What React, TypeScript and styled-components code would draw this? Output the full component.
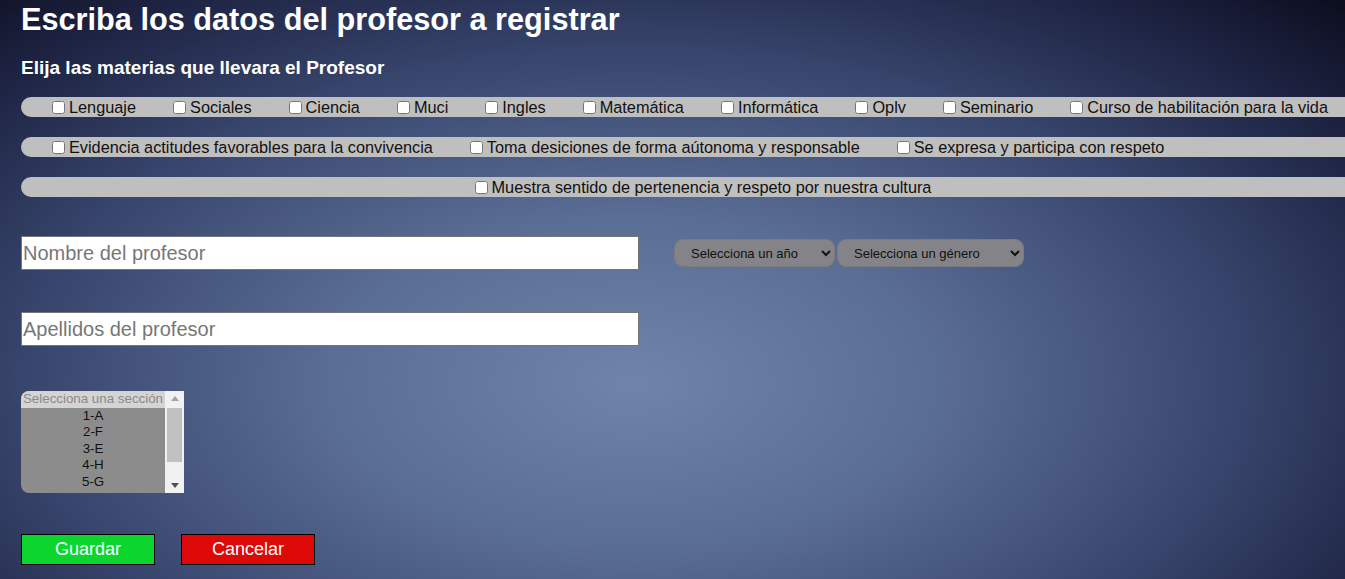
import React from "react";
import styled, { createGlobalStyle } from "styled-components";

const GlobalStyle = createGlobalStyle`
  html, body {
    margin: 0;
    padding: 0;
    height: 100%;
    overflow: hidden;
  }
  body {
    font-family: "Liberation Sans", Arial, sans-serif;
    background: radial-gradient(ellipse 75% 95% at 47% 66%, #7083a8 0%, #5a6d94 30%, #3a4870 58%, #1e2444 82%, #0b0c1c 100%);
    background-color: #141a36;
    width: 1345px;
    height: 579px;
  }
`;

const Page = styled.div`
  display: flex;
  flex-direction: column;
  align-items: flex-start;
  padding: 2px 0 0 21px;
  width: 1400px;
  box-sizing: border-box;
`;

const Title = styled.h1`
  margin: 0;
  font-size: 30.7px;
  font-weight: bold;
  color: #fff;
  line-height: 35px;
`;

const Subtitle = styled.h2`
  margin: 20px 0 0 0;
  font-size: 19px;
  font-weight: bold;
  color: #fff;
  line-height: 22px;
`;

const Rows = styled.div`
  display: flex;
  flex-direction: column;
  gap: 20px;
  margin-top: 18px;
  width: 1360px;
`;

const Row = styled.div<{ $center?: boolean }>`
  display: flex;
  align-items: center;
  justify-content: ${(p) => (p.$center ? "center" : "flex-start")};
  gap: 33px;
  height: 20px;
  padding-left: ${(p) => (p.$center ? "0" : "27px")};
  background: #bfbfbf;
  border-radius: 10px 0 0 10px;
  box-sizing: border-box;
`;

const Item = styled.label`
  display: flex;
  align-items: center;
  font-size: 16.3px;
  color: #111;
  white-space: nowrap;
`;

const Check = styled.input`
  margin: 0 4px 0 4px;
  width: 13px;
  height: 13px;
`;

const FieldArea = styled.div`
  display: flex;
  align-items: flex-start;
  gap: 35px;
  margin-top: 39px;
`;

const Inputs = styled.div`
  display: flex;
  flex-direction: column;
  gap: 42px;
`;

const TextInput = styled.input`
  width: 618px;
  height: 34px;
  box-sizing: border-box;
  border: 1px solid #767676;
  background: #fff;
  font-family: "Liberation Sans", Arial, sans-serif;
  font-size: 20px;
  padding: 0 1px;
  margin: 0;
  &::placeholder {
    color: #777;
  }
`;

const Selects = styled.div`
  display: flex;
  gap: 2px;
  margin-top: 3px;
`;

const Dropdown = styled.select<{ $w: number }>`
  width: ${(p) => p.$w}px;
  height: 28px;
  border-radius: 9px;
  border: 1px solid #7a7a80;
  background: #848488;
  color: #111;
  font-family: "Liberation Sans", Arial, sans-serif;
  font-size: 13px;
  padding: 0 6px 0 12px;
  margin: 0;
`;

const ListBox = styled.div`
  margin-top: 45px;
  width: 163px;
  height: 102px;
  display: flex;
  border-radius: 8px 0 0 8px;
  overflow: hidden;
  background: #8c8c8c;
`;

const OptionList = styled.ul`
  list-style: none;
  margin: 0;
  padding: 0;
  flex: 1;
  min-width: 0;
  overflow: hidden;
  font-family: "Liberation Sans", Arial, sans-serif;
  font-size: 13.33px;
`;

const Option = styled.li<{ $placeholder?: boolean }>`
  height: 16.6px;
  line-height: 16.6px;
  text-align: center;
  white-space: nowrap;
  overflow: hidden;
  color: ${(p) => (p.$placeholder ? "#8a8a8a" : "#111")};
  background: ${(p) => (p.$placeholder ? "#d4d4d4" : "transparent")};
`;

const ScrollBar = styled.div`
  width: 19px;
  background: #f1f1f1;
  display: flex;
  flex-direction: column;
  align-items: center;
`;

const Arrow = styled.div`
  height: 15px;
  width: 100%;
  display: flex;
  align-items: center;
  justify-content: center;
`;

const Track = styled.div`
  flex: 1;
  width: 100%;
  display: flex;
  flex-direction: column;
  padding: 2px 2px 0 2px;
  box-sizing: border-box;
`;

const Thumb = styled.div`
  height: 54px;
  background: #c1c1c1;
`;

const Buttons = styled.div`
  display: flex;
  gap: 26px;
  margin-top: 41px;
`;

const Button = styled.button<{ $bg: string }>`
  width: 134px;
  height: 31px;
  background: ${(p) => p.$bg};
  border: 1px solid #000;
  color: #fff;
  font-family: "Liberation Sans", Arial, sans-serif;
  font-size: 18px;
  padding: 0;
  margin: 0;
`;

const row1 = [
  "Lenguaje",
  "Sociales",
  "Ciencia",
  "Muci",
  "Ingles",
  "Matemática",
  "Informática",
  "Oplv",
  "Seminario",
  "Curso de habilitación para la vida",
];
const row2 = [
  "Evidencia actitudes favorables para la convivencia",
  "Toma desiciones de forma aútonoma y responsable",
  "Se expresa y participa con respeto",
];
const row3 = ["Muestra sentido de pertenencia y respeto por nuestra cultura"];

const sections = ["1-A", "2-F", "3-E", "4-H", "5-G"];

const Tri = ({ up, color }: { up?: boolean; color: string }) => (
  <svg width="8" height="5" viewBox="0 0 8 5">
    <polygon points={up ? "0,5 8,5 4,0" : "0,0 8,0 4,5"} fill={color} />
  </svg>
);

export default function App() {
  return (
    <>
      <GlobalStyle />
      <Page>
        <Title>Escriba los datos del profesor a registrar</Title>
        <Subtitle>Elija las materias que llevara el Profesor</Subtitle>
        <Rows>
          <Row>
            {row1.map((m) => (
              <Item key={m}>
                <Check type="checkbox" />
                {m}
              </Item>
            ))}
          </Row>
          <Row>
            {row2.map((m) => (
              <Item key={m}>
                <Check type="checkbox" />
                {m}
              </Item>
            ))}
          </Row>
          <Row $center>
            {row3.map((m) => (
              <Item key={m}>
                <Check type="checkbox" />
                {m}
              </Item>
            ))}
          </Row>
        </Rows>
        <FieldArea>
          <Inputs>
            <TextInput placeholder="Nombre del profesor" />
            <TextInput placeholder="Apellidos del profesor" />
          </Inputs>
          <Selects>
            <Dropdown $w={161} defaultValue="">
              <option value="" disabled>
                Selecciona un año
              </option>
              <option>2023</option>
              <option>2024</option>
            </Dropdown>
            <Dropdown $w={187} defaultValue="">
              <option value="" disabled>
                Selecciona un género
              </option>
              <option>Masculino</option>
              <option>Femenino</option>
            </Dropdown>
          </Selects>
        </FieldArea>
        <ListBox role="listbox">
          <OptionList>
            <Option $placeholder>Selecciona una sección</Option>
            {sections.map((s) => (
              <Option key={s}>{s}</Option>
            ))}
          </OptionList>
          <ScrollBar>
            <Arrow>
              <Tri up color="#a3a3a3" />
            </Arrow>
            <Track>
              <Thumb />
            </Track>
            <Arrow>
              <Tri color="#505050" />
            </Arrow>
          </ScrollBar>
        </ListBox>
        <Buttons>
          <Button $bg="#0cd52e">Guardar</Button>
          <Button $bg="#dd0808">Cancelar</Button>
        </Buttons>
      </Page>
    </>
  );
}
